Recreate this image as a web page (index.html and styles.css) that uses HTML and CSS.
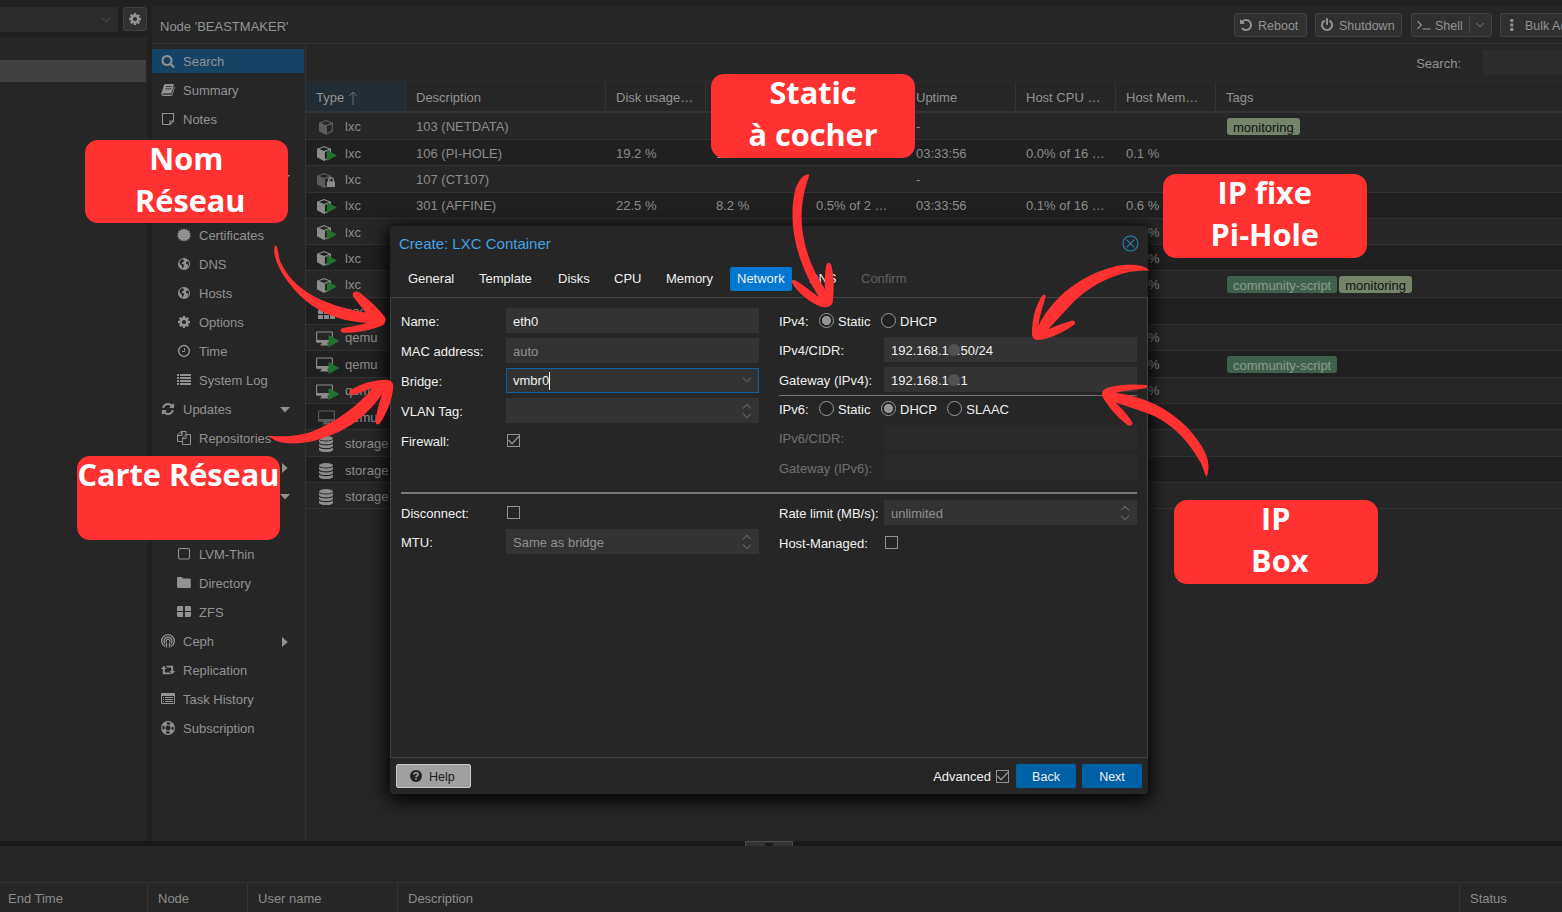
FILE: index.html
```html
<!DOCTYPE html>
<html lang="fr">
<head>
<meta charset="utf-8">
<title>Node 'BEASTMAKER'</title>
<link rel="stylesheet" href="styles.css">
</head>
<body>
<svg class="defs" width="0" height="0" aria-hidden="true">
  <symbol id="search" viewBox="0 0 1792 1792"><path d="M1216 832q0-185-131.5-316.5t-316.5-131.5-316.5 131.5-131.5 316.5 131.5 316.5 316.5 131.5 316.5-131.5 131.5-316.5zm512 832q0 52-38 90t-90 38q-54 0-90-38l-343-342q-179 124-399 124-143 0-273.5-55.5t-225-150-150-225-55.5-273.5 55.5-273.5 150-225 225-150 273.5-55.5 273.5 55.5 225 150 150 225 55.5 273.5q0 220-124 399l343 343q37 37 37 90z"/></symbol>
  <symbol id="cog" viewBox="0 0 1792 1792"><path d="M1152 896q0-106-75-181t-181-75-181 75-75 181 75 181 181 75 181-75 75-181zm512-109v222q0 12-8 23t-20 13l-185 28q-19 54-39 91 35 50 107 138 10 12 10 25t-9 23q-27 37-99 108t-94 71q-12 0-26-9l-138-108q-44 23-91 38-16 136-29 186-7 28-36 28h-222q-14 0-24.5-8.5t-11.5-21.5l-28-184q-49-16-90-37l-141 107q-10 9-25 9-14 0-25-11-126-114-165-168-7-10-7-23 0-12 8-23 15-21 51-66.5t54-70.5q-27-50-41-99l-183-27q-13-2-21-12.5t-8-23.5v-222q0-12 8-23t19-13l186-28q14-46 39-92-40-57-107-138-10-12-10-24 0-10 9-23 26-36 98.5-107.5t94.5-71.5q13 0 26 10l138 107q44-23 91-38 16-136 29-186 7-28 36-28h222q14 0 24.5 8.5t11.5 21.5l28 184q49 16 90 37l142-107q9-9 24-9 13 0 25 10 129 119 165 170 7 8 7 22 0 12-8 23-15 21-51 66.5t-54 70.5q26 50 41 98l183 28q13 2 21 12.5t8 23.5z"/></symbol>
  <symbol id="refresh" viewBox="0 0 1792 1792"><path d="M1639 1056q0 5-1 7-64 268-268 434.5t-478 166.5q-146 0-282.5-55t-243.5-157l-129 129q-19 19-45 19t-45-19-19-45v-448q0-26 19-45t45-19h448q26 0 45 19t19 45-19 45l-137 137q71 66 161 102t187 36q134 0 250-65t186-179q11-17 53-117 8-23 30-23h192q13 0 22.5 9.5t9.5 22.5zm25-800v448q0 26-19 45t-45 19h-448q-26 0-45-19t-19-45 19-45l138-138q-148-137-349-137-134 0-250 65t-186 179q-11 17-53 117-8 23-30 23h-199q-13 0-22.5-9.5t-9.5-22.5v-7q65-268 270-434.5t480-166.5q146 0 284 55.5t245 156.5l130-129q19-19 45-19t45 19 19 45z"/></symbol>
  <symbol id="undo" viewBox="0 0 1792 1792"><path d="M1664 896q0 156-61 298t-164 245-245 164-298 61q-172 0-327-72.5t-264-204.5q-7-10-6.5-22.5t8.5-20.5l137-138q10-9 25-9 16 2 23 12 73 95 179 147t225 52q104 0 198.5-40.5t163.5-109.5 109.5-163.5 40.5-198.5-40.5-198.5-109.5-163.5-163.5-109.5-198.5-40.5q-98 0-188 35.5t-160 101.5l137 138q31 30 14 69-17 40-59 40h-448q-26 0-45-19t-19-45v-448q0-42 40-59 39-17 69 14l130 129q107-101 244.5-156.5t284.5-55.5q156 0 298 61t245 164 164 245 61 298z"/></symbol>
  <symbol id="power" viewBox="0 0 1792 1792"><path d="M1664 896q0 156-61 298t-164 245-245 164-298 61-298-61-245-164-164-245-61-298q0-182 80.5-343t226.5-270q43-32 95.5-25t83.5 50q32 42 24.5 94.5t-49.5 84.5q-98 74-151.5 181t-53.5 228q0 104 40.5 198.5t109.5 163.5 163.5 109.5 198.5 40.5 198.5-40.5 163.5-109.5 109.5-163.5 40.5-198.5q0-121-53.5-228t-151.5-181q-42-32-49.5-84.5t24.5-94.5q31-43 84-50t95 25q146 109 226.5 270t80.5 343zm-640-768v640q0 52-38 90t-90 38-90-38-38-90v-640q0-52 38-90t90-38 90 38 38 90z"/></symbol>
  <symbol id="book" viewBox="0 0 14 14"><path fill-rule="evenodd" d="M4.6 1H12q1.1 0 .8 1.100L10.700 9.600Q10.400 10.500 9.500 10.500H2.200Q1.400 10.500 1.600 11.200 1.800 11.700 2.500 11.700H9.800Q10.800 11.700 11.100 10.700L13.200 3.400Q14 3.800 13.700 4.800L11.700 11.600Q11.300 13 10 13H2.400Q.9 13 .4 11.600.2 10.800.5 9.900L2.900 2.200Q3.300 1 4.600 1zM5 3.200 4.700 4.100H10.600L10.900 3.200zM4.400 5.400 4.100 6.300H10L10.300 5.400z"/></symbol>
  <symbol id="note" viewBox="0 0 14 14"><path fill="none" stroke="currentColor" stroke-width="1.100" d="M1.500 1.500h11v7.600l-3.400 3.400H1.500zM12.500 9H9v3.500"/></symbol>
  <symbol id="certificate" viewBox="0 0 14 14"><path d="M7 .3 8.300 1.900 10 .8 10.600 2.800 12.700 2.700 12.300 4.700 14 5.600 12.700 7 14 8.400 12.300 9.300 12.700 11.300 10.600 11.200 10 13.200 8.300 12.100 7 13.700 5.700 12.100 4 13.200 3.400 11.200 1.300 11.300 1.700 9.300 0 8.400 1.300 7 0 5.600 1.700 4.700 1.300 2.700 3.400 2.800 4 .8 5.700 1.900z"/></symbol>
  <symbol id="globe" viewBox="0 0 14 14"><path fill-rule="evenodd" d="M7 1a6 6 0 1 0 0 12A6 6 0 0 0 7 1zM3 3.700 4.700 2.200 6.500 2 6 3.100 7.300 3.700 6.200 5 5 5.400 4.500 6.600 6.400 7.200 7.300 8.400 6.500 9.600 5.800 11.700 5 10.200 4.800 8.600 3.400 7.500 2.400 5.900zM8.700 2.200Q10.700 2.800 11.600 4.600L10.300 4.400 9.200 5 8.800 6.200 9.600 7.300 10.900 7.300 11 8.900 9.900 11.100Q12 9.800 12 7 12 3.200 8.700 2.200z"/></symbol>
  <symbol id="clock" viewBox="0 0 14 14"><path fill="none" stroke="currentColor" stroke-width="1.500" d="M7 1.600a5.400 5.400 0 1 0 0 10.800A5.400 5.400 0 0 0 7 1.600z"/><path fill="none" stroke="currentColor" d="M7.500 4v3.500H5"/></symbol>
  <symbol id="list" viewBox="0 0 14 14"><path d="M0 1h2v2H0zM3 1h11v2H3zM0 4h2v2H0zM3 4h11v2H3zM0 7h2v2H0zM3 7h11v2H3zM0 10h2v2H0zM3 10h11v2H3z"/></symbol>
  <symbol id="files" viewBox="0 0 14 14"><path fill="none" stroke="currentColor" d="M5 4.500V.5h4v3M5 .5 4 .5.5 4v6.500h5M.5 4.500H4.500V.5M5.500 13.500v-6.500L9 3.500h4.500v10zM9 3.500V7.500H5.500"/></symbol>
  <symbol id="square" viewBox="0 0 14 14"><rect x="1.500" y="1.500" width="11" height="10.500" rx="1.800" fill="none" stroke="currentColor" stroke-width="1.100"/></symbol>
  <symbol id="folder" viewBox="0 0 14 14"><path d="M1.300 1H4.700Q5.800 1 5.800 2.500H12.500Q13.800 2.500 13.800 3.800V10.700Q13.800 12 12.500 12H1.300Q0 12 0 10.700V2.300Q0 1 1.300 1z"/></symbol>
  <symbol id="large" viewBox="0 0 14 14"><path d="M1 1h5v5H0V2zM8 1h5l1 1v4H8zM0 7h6v5H1l-1-1zM8 7h6v4l-1 1H8z"/></symbol>
  <symbol id="ceph" viewBox="0 0 14 14"><g fill="none" stroke="currentColor" stroke-width="1.300"><path d="M4 12.500A6.300 6.300 0 1 1 10 12.500"/><path d="M4.200 9.900A4 4 0 1 1 9.800 9.900"/><path d="M5.500 13.500V9.300M8.500 13.500V9.300"/><path d="M5.600 8.400A1.900 1.900 0 1 1 8.400 8.400"/></g></symbol>
  <symbol id="retweet" viewBox="0 0 15 14"><path d="M3 2.500 6 6H4v3.600h5.500L11 11.500H2V6H0zM5.300 2.500H13V8h2L12 11.500 9 8h2V4.400H6.900z"/></symbol>
  <symbol id="listalt" viewBox="0 0 14 14"><path fill-rule="evenodd" d="M1 1h12q1 0 1 1v9q0 1-1 1H1q-1 0-1-1V2q0-1 1-1zM1 4v7h12V4zM2 5h1v1H2zM4 5h8v1H4zM2 7h1v1H2zM4 7h8v1H4zM2 9h1v1H2zM4 9h8v1H4z"/></symbol>
  <symbol id="ring" viewBox="0 0 14 14"><g fill="none" stroke="currentColor"><circle cx="7" cy="7" r="6.300" stroke-width="1.200"/><circle cx="7" cy="7" r="3.100" stroke-width="1"/><circle cx="7" cy="7" r="4.700" stroke-width="3" stroke-dasharray="3.690" stroke-dashoffset="-1.850"/></g></symbol>
  <symbol id="cube" viewBox="0 0 16 16"><path fill-rule="evenodd" d="M8 0 15.500 2.800V12L8 16 .5 12V2.800zM8 1.200 2.800 3.200 8 5.200 13.200 3.200zM9 6.400V14L14.200 11.300V4.400z"/></symbol>
  <symbol id="desktop" viewBox="0 0 18 16"><path fill-rule="evenodd" d="M1 .5h16q1 0 1 1v10q0 1-1 1h-5l.6 2h.9v1H4.500v-1h.9l.6-2H1q-1 0-1-1v-10q0-1 1-1zM1.200 1.700V9.500h15.600V1.700z"/></symbol>
  <symbol id="play" viewBox="0 0 10 11"><path fill="#22722f" d="M0 0 10 5.500 0 11z"/></symbol>
  <symbol id="lock" viewBox="0 0 8 10"><path fill-rule="evenodd" d="M1 4.500V3a3 3 0 0 1 6 0v1.500h1V10H0V4.500zM2.300 4.500h3.400V3a1.700 1.700 0 0 0-3.400 0z"/></symbol>
  <symbol id="pool" viewBox="0 0 17 14"><path d="M0 0h5v4H0zM6 0h5v4H6zM12 0h5v4h-5zM0 5h5v4H0zM6 5h5v4H6zM12 5h5v4h-5zM0 10h5v4H0zM6 10h5v4H6zM12 10h5v4h-5z"/></symbol>
  <symbol id="db" viewBox="0 0 14 16"><ellipse cx="7" cy="2.300" rx="7" ry="2.300"/><path d="M0 3.800q1.500 1.700 7 1.700t7-1.700v2.100q-.5 2.300-7 2.300T0 5.900zM0 7.700q1.500 1.700 7 1.700t7-1.700v2.100q-.5 2.300-7 2.300T0 9.800zM0 11.600q1.500 1.700 7 1.700t7-1.700v2.100Q13.500 16 7 16T0 13.700z"/></symbol>
  <symbol id="chev" viewBox="0 0 10 6"><path fill="none" stroke="currentColor" stroke-width="1.100" d="M1 .8 5 4.800 9 .8"/></symbol>
  <symbol id="spin" viewBox="0 0 10 16"><path fill="none" stroke="currentColor" stroke-width="1.100" d="M1 5.300 5 1.300 9 5.300M1 10.700 5 14.700 9 10.700"/></symbol>
  <symbol id="check" viewBox="0 0 13 13"><path fill="none" stroke="currentColor" stroke-width="1.300" d="M1.500 6 5 9.800 12 2.300"/></symbol>
  <symbol id="tri-d" viewBox="0 0 10 6"><path d="M0 0h10L5 5.500z"/></symbol>
  <symbol id="tri-r" viewBox="0 0 6 10"><path d="M0 0v10l5.700-5z"/></symbol>
</svg>

<div class="shell">
  <aside class="tree">
    <div class="tree-bar">
      <div class="tree-select"><svg class="chev"><use href="#chev"/></svg></div>
      <div class="btn gear"><svg class="i14"><use href="#cog"/></svg></div>
    </div>
    <div class="tree-body"><div class="tree-row"></div></div>
  </aside>

  <main class="main">
    <header class="head">
      <span class="grow">Node 'BEASTMAKER'</span>
      <div class="btn reboot"><svg class="i14"><use href="#undo"/></svg><span>Reboot</span></div>
      <div class="btn shutdown"><svg class="i14"><use href="#power"/></svg><span>Shutdown</span></div>
      <div class="btn term"><svg class="prompt" viewBox="0 0 14 10"><path fill="none" stroke="currentColor" stroke-width="1.200" d="M.5 1.200 4.300 5 .5 8.800M5.500 9H13.500"/></svg><span>Shell</span><i class="split"></i><svg class="chev dim"><use href="#chev"/></svg></div>
      <div class="btn bulk"><svg class="dots" viewBox="0 0 4 12"><path d="M.3 0h3v3h-3zM.3 4.500h3v3h-3zM.3 9h3v3h-3z"/></svg><span>Bulk Actions</span></div>
    </header>
    <div class="content">
      <nav class="nav">
        <div class="item on"><svg class="i14"><use href="#search"/></svg><span>Search</span></div>
        <div class="item"><svg class="i14"><use href="#book"/></svg><span>Summary</span></div>
        <div class="item"><svg class="i14"><use href="#note"/></svg><span>Notes</span></div>
        <div class="item"></div>
        <div class="item"><svg class="exp d"><use href="#tri-d"/></svg></div>
        <div class="item"></div>
        <div class="item sub"><svg class="i14"><use href="#certificate"/></svg><span>Certificates</span></div>
        <div class="item sub"><svg class="i14"><use href="#globe"/></svg><span>DNS</span></div>
        <div class="item sub"><svg class="i14"><use href="#globe"/></svg><span>Hosts</span></div>
        <div class="item sub"><svg class="i14"><use href="#cog"/></svg><span>Options</span></div>
        <div class="item sub"><svg class="i14"><use href="#clock"/></svg><span>Time</span></div>
        <div class="item sub"><svg class="i14"><use href="#list"/></svg><span>System Log</span></div>
        <div class="item"><svg class="i14"><use href="#refresh"/></svg><span>Updates</span><svg class="exp d"><use href="#tri-d"/></svg></div>
        <div class="item sub"><svg class="i14"><use href="#files"/></svg><span>Repositories</span></div>
        <div class="item"><svg class="exp r"><use href="#tri-r"/></svg></div>
        <div class="item"><svg class="exp d"><use href="#tri-d"/></svg></div>
        <div class="item"></div>
        <div class="item sub"><svg class="i14"><use href="#square"/></svg><span>LVM-Thin</span></div>
        <div class="item sub"><svg class="i14"><use href="#folder"/></svg><span>Directory</span></div>
        <div class="item sub"><svg class="i14"><use href="#large"/></svg><span>ZFS</span></div>
        <div class="item"><svg class="i14"><use href="#ceph"/></svg><span>Ceph</span><svg class="exp r"><use href="#tri-r"/></svg></div>
        <div class="item"><svg class="i14"><use href="#retweet"/></svg><span>Replication</span></div>
        <div class="item"><svg class="i14"><use href="#listalt"/></svg><span>Task History</span></div>
        <div class="item"><svg class="i14"><use href="#ring"/></svg><span>Subscription</span></div>
      </nav>
      <section class="grid">
        <div class="filter"><span>Search:</span><div class="filter-in"></div></div>
        <div class="row th">
          <div class="c type">Type<svg class="sort" viewBox="0 0 10 14"><path fill="none" stroke="currentColor" d="M5 14V1M1 5.200 5 1 9 5.200"/></svg></div>
          <div class="c">Description</div><div class="c">Disk usage…</div><div class="c"></div><div class="c"></div><div class="c">Uptime</div><div class="c">Host CPU …</div><div class="c">Host Mem…</div><div class="c">Tags</div>
        </div>
        <div class="row t"><div class="c"><span class="ic off mid"><svg class="cube"><use href="#cube"/></svg></span>lxc</div><div class="c">103 (NETDATA)</div><div class="c"></div><div class="c"></div><div class="c"></div><div class="c">-</div><div class="c"></div><div class="c"></div><div class="c tags"><b class="tag mon">monitoring</b></div></div>
        <div class="row"><div class="c"><span class="ic"><svg class="cube"><use href="#cube"/></svg><svg class="run"><use href="#play"/></svg></span>lxc</div><div class="c">106 (PI-HOLE)</div><div class="c">19.2 %</div><div class="c">10.7 %</div><div class="c">0.2% of 1 …</div><div class="c">03:33:56</div><div class="c">0.0% of 16 …</div><div class="c">0.1 %</div><div class="c"></div></div>
        <div class="row t"><div class="c"><span class="ic off"><svg class="cube"><use href="#cube"/></svg><svg class="lock"><use href="#lock"/></svg></span>lxc</div><div class="c">107 (CT107)</div><div class="c"></div><div class="c"></div><div class="c"></div><div class="c">-</div><div class="c"></div><div class="c"></div><div class="c"></div></div>
        <div class="row up"><div class="c"><span class="ic"><svg class="cube"><use href="#cube"/></svg><svg class="run"><use href="#play"/></svg></span>lxc</div><div class="c">301 (AFFINE)</div><div class="c">22.5 %</div><div class="c">8.2 %</div><div class="c">0.5% of 2 …</div><div class="c">03:33:56</div><div class="c">0.1% of 16 …</div><div class="c">0.6 %</div><div class="c"></div></div>
        <div class="row"><div class="c"><span class="ic"><svg class="cube"><use href="#cube"/></svg><svg class="run"><use href="#play"/></svg></span>lxc</div><div class="c mem">%</div></div>
        <div class="row"><div class="c"><span class="ic"><svg class="cube"><use href="#cube"/></svg><svg class="run"><use href="#play"/></svg></span>lxc</div><div class="c mem">%</div></div>
        <div class="row t"><div class="c"><span class="ic"><svg class="cube"><use href="#cube"/></svg><svg class="run"><use href="#play"/></svg></span>lxc</div><div class="c mem">%</div><div class="c tags"><b class="tag com">community-script</b><b class="tag mon">monitoring</b></div></div>
        <div class="row t"><div class="c"><span class="ic mid"><svg class="pool"><use href="#pool"/></svg></span>pool</div></div>
        <div class="row up"><div class="c"><span class="ic"><svg class="desk"><use href="#desktop"/></svg><svg class="run q"><use href="#play"/></svg></span>qemu</div><div class="c mem">%</div></div>
        <div class="row t up"><div class="c"><span class="ic"><svg class="desk"><use href="#desktop"/></svg><svg class="run q"><use href="#play"/></svg></span>qemu</div><div class="c mem">%</div><div class="c tags"><b class="tag com">community-script</b></div></div>
        <div class="row up"><div class="c"><span class="ic"><svg class="desk"><use href="#desktop"/></svg><svg class="run q"><use href="#play"/></svg></span>qemu</div><div class="c mem">%</div></div>
        <div class="row"><div class="c"><span class="ic off mid"><svg class="desk"><use href="#desktop"/></svg></span>qemu</div></div>
        <div class="row t"><div class="c"><span class="ic db"><svg class="dbi"><use href="#db"/></svg></span>storage</div></div>
        <div class="row"><div class="c"><span class="ic db"><svg class="dbi"><use href="#db"/></svg></span>storage</div></div>
        <div class="row"><div class="c"><span class="ic db"><svg class="dbi"><use href="#db"/></svg></span>storage</div></div>
      </section>
    </div>
  </main>
</div>
<div class="splitter"><div class="handle"><svg class="tri"><use href="#tri-d"/></svg></div></div>
<footer class="log">
  <div class="log-head"><div>End Time</div><div>Node</div><div>User name</div><div>Description</div><div>Status</div></div>
</footer>

<div class="modal">
  <div class="m-title">Create: LXC Container<svg class="close" viewBox="0 0 17 17"><g fill="none" stroke="currentColor" stroke-width="1.100"><circle cx="8.500" cy="8.500" r="7.500"/><path d="M4.700 4.700 12.300 12.300M12.300 4.700 4.700 12.300"/></g></svg></div>
  <div class="tabs"><div>General</div><div>Template</div><div>Disks</div><div>CPU</div><div>Memory</div><div class="sel">Network</div><div>DNS</div><div class="dis">Confirm</div></div>
  <div class="m-body">
    <div class="cols top">
      <div class="col">
        <div class="f"><label>Name:</label><div class="in">eth0</div></div>
        <div class="f"><label>MAC address:</label><div class="in ph">auto</div></div>
        <div class="f"><label>Bridge:</label><div class="in focus">vmbr0<i class="caret"></i><svg class="chev"><use href="#chev"/></svg></div></div>
        <div class="f"><label>VLAN Tag:</label><div class="in"><svg class="spin"><use href="#spin"/></svg></div></div>
        <div class="f"><label>Firewall:</label><div class="cb"><svg><use href="#check"/></svg></div></div>
      </div>
      <div class="col right">
        <div class="f radios"><span class="rl">IPv4:</span><i class="rd on"></i><span class="rt">Static</span><i class="rd"></i><span class="rt">DHCP</span></div>
        <div class="f"><label>IPv4/CIDR:</label><div class="in">192.168.1<i class="dot"></i>.50/24</div></div>
        <div class="f"><label>Gateway (IPv4):</label><div class="in">192.168.1<i class="dot"></i>.1</div></div>
        <div class="f radios six"><span class="rl">IPv6:</span><i class="rd"></i><span class="rt">Static</span><i class="rd on"></i><span class="rt">DHCP</span><i class="rd"></i><span class="rt">SLAAC</span></div>
        <div class="f faded"><label>IPv6/CIDR:</label><div class="in"></div></div>
        <div class="f faded"><label>Gateway (IPv6):</label><div class="in"></div></div>
      </div>
    </div>
    <div class="rule"></div>
    <div class="cols">
      <div class="col low">
        <div class="f"><label>Disconnect:</label><div class="cb"></div></div>
        <div class="f"><label>MTU:</label><div class="in ph">Same as bridge<svg class="spin"><use href="#spin"/></svg></div></div>
      </div>
      <div class="col right low2">
        <div class="f"><label>Rate limit (MB/s):</label><div class="in ph">unlimited<svg class="spin"><use href="#spin"/></svg></div></div>
        <div class="f"><label>Host-Managed:</label><div class="cb"></div></div>
      </div>
    </div>
  </div>
  <div class="m-foot">
    <div class="help"><svg class="q" viewBox="0 0 12 12"><circle cx="6" cy="6" r="6"/><path fill="none" stroke="#a0a0a0" stroke-width="1.600" d="M3.900 4.600Q4 2.800 6 2.800T8.100 4.500Q8.100 5.400 6.900 5.900 6 6.300 6 7.300M6 8.200V9.800"/></svg><span>Help</span></div>
    <span class="adv">Advanced</span><div class="cb"><svg><use href="#check"/></svg></div>
    <div class="go">Back</div><div class="go">Next</div>
  </div>
</div>

<svg class="arrows" viewBox="0 0 1562 912">
  <path transform="translate(0 220) scale(.33333)" d="M827 75C836 85 834 110 843 130C880 205 960 255 1098 278C1085 260 1070 245 1060 230C1052 214 1072 208 1085 222C1112 245 1140 270 1155 292Q1160 307 1148 316C1110 332 1065 340 1030 338C1018 334 1020 326 1030 324C1060 318 1085 315 1100 309C980 300 905 250 850 165C828 130 815 90 827 75Z"/>
  <path transform="translate(0 220) scale(.33333)" d="M807 647C860 653 905 645 935 635C1010 605 1070 560 1119 504C1100 508 1080 520 1057 526Q1043 522 1050 511C1085 490 1120 480 1160 479Q1179 482 1180 497C1178 540 1160 580 1138 612Q1126 616 1127 602C1130 572 1138 545 1147 522C1090 600 1030 640 940 663C890 674 830 675 807 647Z"/>
  <path transform="translate(700 60) scale(.33333)" d="M328 344C315 340 298 355 287 385C262 480 285 600 357 712C335 695 310 675 285 660Q272 658 276 668C295 700 330 728 365 741Q392 744 398 728C403 690 402 650 394 615Q386 602 379 614C374 640 374 665 375 688C330 620 302 540 305 460C307 410 318 375 328 344Z"/>
  <path transform="translate(1000 240) scale(.33333)" d="M449 92C430 72 390 71 350 78C240 105 160 170 115 258C118 230 128 200 137 170Q134 158 126 168C105 200 95 240 96 285Q98 300 115 300C155 295 195 275 225 252Q226 240 214 242C190 250 165 258 145 267C180 232 215 188 250 160C310 115 380 88 449 92Z"/>
  <path transform="translate(1000 240) scale(.33333)" d="M620 711C612 700 610 685 603 670C560 590 500 540 440 519C405 507 370 494 347 488C365 505 385 525 398 550Q395 560 382 555C350 530 325 500 306 468Q303 450 322 443C360 432 400 432 440 435Q444 441 438 445C405 450 375 452 347 458C430 468 505 505 560 560C605 610 640 660 620 711Z"/>
</svg>
<div class="note n1"><div>Nom<br>&nbsp;Réseau</div></div>
<div class="note n2"><div>Carte Réseau</div></div>
<div class="note n3"><div>Static<br>à cocher</div></div>
<div class="note n4"><div>IP fixe<br>Pi-Hole</div></div>
<div class="note n5"><div>IP<br>&nbsp;Box</div></div>
</body>
</html>
```
FILE: styles.css
```css
* { box-sizing: border-box; }
body {
  margin: 0; width: 1562px; height: 912px; overflow: hidden; position: relative;
  background: #212121; color: #929292;
  font: 13px/16px "Liberation Sans", Arial, sans-serif;
}
svg { fill: currentColor; flex: none; display: block; }
.defs { position: absolute; }
.i14 { width: 14px; height: 14px; }
.chev { width: 10px; height: 6px; }

.shell { display: flex; height: 841px; padding-top: 7px; gap: 5px; }
.tree { width: 147px; display: flex; flex-direction: column; gap: 5px; }
.tree-bar { display: flex; justify-content: space-between; height: 25px; }
.tree-select { width: 118px; background: #2b2b2b; color: #484848; display: flex; align-items: center; justify-content: flex-end; padding-right: 7px; }
.gear { width: 24px; height: 24px; justify-content: center; }
.tree-body { flex: 1; background: #262626; padding-top: 23px; }
.tree-row { height: 22px; width: 146px; background: #404040; }

.btn { display: flex; align-items: center; height: 24px; background: #303030; border: 1px solid #404040; border-radius: 3px; font-size: 12.5px; }
.btn span { padding-top: 2px; }
.dim { color: #686868; }
.main { flex: 1; min-width: 0; background: #262626; display: flex; flex-direction: column; }
.head { height: 37px; border-bottom: 1px solid #333; display: flex; align-items: flex-start; padding: 6px 0 0 8px; overflow: hidden; white-space: nowrap; }
.grow { flex: 1; padding-top: 6px; }
.reboot { width: 73px; margin-right: 8px; padding-left: 4px; gap: 5px; }
.shutdown { width: 87px; margin-right: 9px; padding-left: 4px; gap: 5px; }
.term { width: 81px; margin-right: 8px; padding-left: 5px; }
.prompt { width: 14px; height: 10px; margin-right: 4px; }
.split { width: 1px; height: 16px; background: #484848; margin: 0 5px 0 6px; }
.bulk { width: 62px; flex: none; border-right: 0; border-radius: 3px 0 0 3px; padding-left: 9px; gap: 11px; }
.dots { width: 4px; height: 12px; }

.content { flex: 1; display: flex; min-height: 0; }
.nav { width: 154px; border-right: 1px solid #333; padding: 5px 1px 0 0; display: flex; flex-direction: column; gap: 5px; }
.item { height: 24px; display: flex; align-items: center; gap: 8px; padding: 0 14px 0 9px; }
.item span { padding-top: 2px; }
.item.sub { padding-left: 25px; }
.item.on { background: #144365; }
.exp { margin-left: auto; }
.exp.d { width: 10px; height: 6px; position: relative; top: 1px; }
.exp.r { width: 6px; height: 10px; margin-right: 2px; position: relative; top: 1px; }

.grid { flex: 1; min-width: 0; }
.filter { height: 37px; display: flex; justify-content: flex-end; align-items: flex-start; padding-top: 6px; }
.filter span { padding: 6px 22px 0 0; }
.filter-in { width: 79px; height: 25px; background: #2c2c2c; }
.row { height: 26px; display: grid; grid-template-columns: 100px 200px 100px 100px 100px 110px 100px 100px 1fr; border-bottom: 1px solid #323232; color: #8c8c8c; }
.row.t { height: 27px; }
.row:nth-child(even) { background: #262626; }
.row:nth-child(2n+4) { background: #202020; }
.c { display: flex; align-items: center; padding: 2px 0 0 10px; white-space: nowrap; min-width: 0; }
.row.up .c { padding-top: 1px; }
.row.th { height: 32px; background: #262626; border-top: 1px solid #2d2d2d; border-bottom: 2px solid #333; color: #929292; }
.row.th .c { border-right: 1px solid #333; padding-top: 2px; }
.row.th .c:last-child { border: 0; }
.row.th .c:nth-child(5) { border: 0; }
.row.th .type { background: #212c35; }
.sort { width: 10px; height: 14px; margin-left: 4px; color: #6c6c6c; }
.ic { width: 29px; height: 16px; display: flex; align-items: center; position: relative; }
.off .cube, .off .desk { color: #5c5c5c; }
.mid { padding-left: 2px; }
.cube { width: 16px; height: 15px; }
.run { width: 10px; height: 11px; position: absolute; left: 11px; top: 4px; }
.run.q { left: 12px; top: 5px; }
.lock { width: 8px; height: 10px; position: absolute; left: 11px; top: 5px; }
.desk { width: 17px; height: 15px; }
.pool { width: 17px; height: 14px; }
.db { padding-left: 3px; }
.dbi { width: 14px; height: 16px; }
.mem { grid-column: 8; padding-left: 32px; }
.row .tags, .row.up .tags { grid-column: 9; gap: 2px; padding: 1px 0 0 11px; }
.tag { font-weight: 400; height: 17px; line-height: 19px; padding: 0 6px; border-radius: 3px; }
.mon { background: #74846b; color: #111; }
.com { background: #3f614c; color: #8f9a8f; }

.splitter { height: 5px; background: #191919; padding-left: 745px; }
.handle { width: 48px; height: 5px; background: #333; border: 1px solid #4a4a4a; border-bottom: 0; padding-top: 1px; display: flex; justify-content: center; overflow: hidden; color: #181818; }
.tri { width: 10px; height: 6px; }
.log { height: 66px; background: #262626; padding-top: 36px; }
.log-head { height: 30px; border-top: 1px solid #333; display: grid; grid-template-columns: 148px 100px 150px 1062px 1fr; color: #8c8c8c; }
.log-head div { border-right: 1px solid #333; padding: 8px 0 0 10px; }
.log-head div:first-child { padding-left: 8px; }
.log-head div:last-child { border: 0; }

.modal { position: absolute; left: 390px; top: 226px; width: 758px; height: 568px; background: #262626; border-radius: 4px; box-shadow: 0 4px 18px 2px #000; color: #f0f0f0; display: flex; flex-direction: column; }
.m-title { height: 41px; padding: 9px 9px 0 9px; display: flex; justify-content: space-between; font-size: 15px; line-height: 18px; color: #42a1e4; }
.close { width: 17px; height: 17px; color: #2288b8; }
.tabs { height: 30px; display: flex; gap: 10px; padding-left: 11px; }
.tabs div { height: 24px; line-height: 24px; padding: 0 7px; white-space: nowrap; }
.tabs div:nth-child(1), .tabs div:nth-child(5) { width: 61px; }
.tabs div:nth-child(2) { width: 69px; }
.tabs div:nth-child(3) { width: 46px; }
.tabs div:nth-child(4), .tabs div:nth-child(7) { width: 42px; }
.tabs .sel { width: 62px; background: #0077d0; border-radius: 2px; }
.tabs .dis { color: #606060; }
.m-body { height: 461px; border: 1px solid #424242; padding: 10px; }
.cols { display: flex; gap: 20px; }
.top { height: 184px; }
.col { width: 358px; display: flex; flex-direction: column; gap: 5px; }
.f { height: 25px; display: flex; align-items: center; }
.f label { width: 105px; padding-top: 2px; white-space: nowrap; }
.in { flex: 1; height: 25px; background: #333; display: flex; align-items: center; padding: 2px 7px 0; position: relative; }
.in.ph { color: #909090; }
.in.focus { border: 1px solid #0c62a4; padding: 1px 6px 0; }
.in .chev, .in .spin { margin: -2px 0 0 auto; color: #636363; }
.spin { width: 10px; height: 16px; }
.caret { width: 1px; height: 18px; background: #fff; }
.cb { width: 13px; height: 13px; border: 1px solid #929292; margin-left: 1px; color: #929292; }
.cb svg { width: 13px; height: 13px; margin: -1px; }
.right .radios { height: 24px; }
.rl { width: 40px; padding-top: 3px; }
.rd { width: 15px; height: 15px; border: 1px solid #999; border-radius: 50%; margin-right: 4px; background: #202020; }
.rd.on { background: radial-gradient(circle, #929292 4.300px, #202020 5px); }
.rt { margin-right: 10.5px; padding-top: 3px; }
.right .six { height: 25px; border-top: 1px solid #727272; margin-top: -2px; margin-bottom: 2px; }
.right .six { margin-bottom: 0; }
.faded { opacity: .35; }
.faded .in { background: #333; }
.dot { width: 12px; height: 12px; border-radius: 50%; background: #505252; margin: -2px -3px 0 -1px; z-index: 1; }
.rule { height: 2px; background: #7c7c7c; }
.low { padding-top: 6px; }
.low .f + .f { margin-top: -1px; }
.low2 { padding-top: 6px; }
.m-foot { flex: 1; display: flex; align-items: flex-start; padding: 6px 6px 0 6px; }
.m-foot .cb { margin: 6px 7px 0 5px; }
.help { width: 75px; height: 24px; background: #a0a0a0; border: 1px solid #c8c8c8; border-radius: 2px; color: #202020; display: flex; align-items: center; gap: 7px; padding-left: 13px; font-size: 12.500px; margin-right: auto; }
.help span { padding-top: 2px; }
.q { width: 12px; height: 12px; }
.adv { padding-top: 5px; }
.go { width: 60px; height: 24px; line-height: 26px; text-align: center; background: #0060a5; border-radius: 2px; font-size: 12.500px; }
.go + .go { margin-left: 6px; }

.arrows { position: absolute; left: 0; top: 0; width: 1562px; height: 912px; fill: #ff3131; }
.note { position: absolute; width: 203.5px; height: 83.5px; background: #ff3131; border-radius: 13px; color: #fff; text-align: center; font: 700 30.700px/42px "Open Sans", sans-serif; white-space: nowrap; }
.note div { margin-top: -3px; }
.n1 { left: 84.5px; top: 139.5px; }
.n2 { left: 76.7px; top: 456.3px; }
.n3 { left: 711.3px; top: 74px; }
.n4 { left: 1163px; top: 174px; }
.n5 { left: 1174px; top: 500px; }
```
